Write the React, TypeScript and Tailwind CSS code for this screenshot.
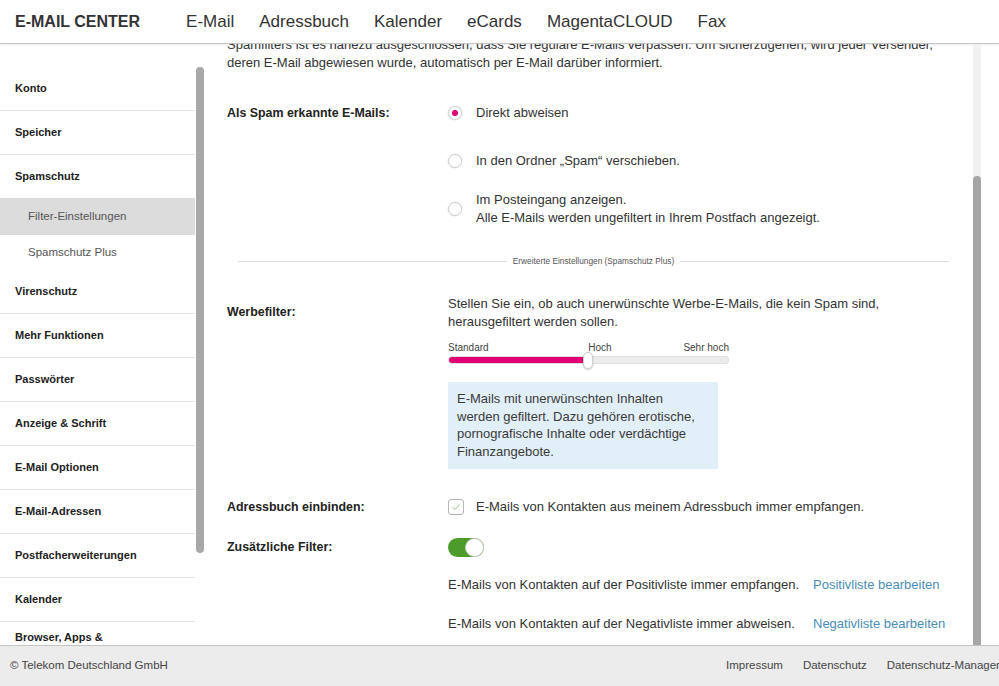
import React from "react";

const navItems = ["E-Mail", "Adressbuch", "Kalender", "eCards", "MagentaCLOUD", "Fax"];

type SideItem = { label: string; sub?: boolean; active?: boolean; h: string; border?: boolean };

const sideItems: SideItem[] = [
    { label: "Konto", h: "h-[44px] items-center", border: true },
    { label: "Speicher", h: "h-[44px] items-center", border: true },
    { label: "Spamschutz", h: "h-[43px] items-center" },
    { label: "Filter-Einstellungen", sub: true, active: true, h: "h-[37px] items-center" },
    { label: "Spamschutz Plus", sub: true, h: "h-[35px] items-center" },
    { label: "Virenschutz", h: "h-[44px] items-center", border: true },
    { label: "Mehr Funktionen", h: "h-[44px] items-center", border: true },
    { label: "Passwörter", h: "h-[44px] items-center", border: true },
    { label: "Anzeige & Schrift", h: "h-[44px] items-center", border: true },
    { label: "E-Mail Optionen", h: "h-[44px] items-center", border: true },
    { label: "E-Mail-Adressen", h: "h-[44px] items-center", border: true },
    { label: "Postfacherweiterungen", h: "h-[44px] items-center", border: true },
    { label: "Kalender", h: "h-[44px] items-center", border: true },
    { label: "Browser, Apps &", h: "h-[60px] items-start pt-[7px]", border: true },
];

const Radio = ({ checked }: { checked?: boolean }) => (
    <span className="w-[14px] h-[14px] rounded-full border border-[#d0d0d0] bg-white shadow-[0_0_2px_rgba(0,0,0,0.15)] flex items-center justify-center shrink-0">
        {checked && <span className="w-[6px] h-[6px] rounded-full bg-[#e20074]" />}
    </span>
);

const Sidebar = () => (
    <div className="flex shrink-0">
        <div className="w-[195px] pt-[23px]">
            {sideItems.map((it) => (
                <div
                    key={it.label}
                    className={`${it.h} flex ${it.border ? "border-b border-[#e3e3e3]" : ""} ${it.active ? "bg-[#dcdcdc]" : ""} ${it.sub ? "pl-[28px] text-[11.5px] text-[#555]" : "pl-[15px] text-[11px] font-bold text-[#222]"}`}
                >
                    {it.label}
                </div>
            ))}
        </div>
        <div className="w-[10px] pt-[23px] pl-[1px]">
            <div className="w-[8px] h-[486px] rounded-full bg-[#a8a8a8]" />
        </div>
    </div>
);

const Label = ({ children, className = "" }: { children: React.ReactNode; className?: string }) => (
    <div className={`w-[221px] shrink-0 text-[12.4px] font-bold text-[#222] leading-[18px] ${className}`}>{children}</div>
);

const Main = () => (
    <div className="flex-1 flex overflow-hidden">
        <div className="flex-1 pl-[22px] pr-[13px] text-[13px] text-[#333] leading-[18px] overflow-hidden">
            <div className="-mt-[8px] whitespace-nowrap">
                <div>Spamfilters ist es nahezu ausgeschlossen, dass Sie reguläre E-Mails verpassen. Um sicherzugehen, wird jeder Versender,</div>
                <div>deren E-Mail abgewiesen wurde, automatisch per E-Mail darüber informiert.</div>
            </div>

            <div className="flex mt-[17px]">
                <Label className="pt-[15px]">Als Spam erkannte E-Mails:</Label>
                <div className="flex flex-col">
                    <div className="h-[48px] flex items-center gap-[14px]">
                        <Radio checked />
                        <span>Direkt abweisen</span>
                    </div>
                    <div className="h-[48px] flex items-center gap-[14px]">
                        <Radio />
                        <span>In den Ordner „Spam“ verschieben.</span>
                    </div>
                    <div className="h-[48px] flex items-center gap-[14px]">
                        <Radio />
                        <span>
                            Im Posteingang anzeigen.
                            <br />
                            Alle E-Mails werden ungefiltert in Ihrem Postfach angezeigt.
                        </span>
                    </div>
                </div>
            </div>

            <div className="mx-[11px] mt-[20px] h-[16px] flex items-center">
                <div className="flex-1 h-px bg-[#dcdcdc]" />
                <span className="px-[6px] text-[8.3px] text-[#555] whitespace-nowrap">Erweiterte Einstellungen (Spamschutz Plus)</span>
                <div className="flex-1 h-px bg-[#dcdcdc]" />
            </div>

            <div className="flex mt-[26px]">
                <Label className="pt-[8px]">Werbefilter:</Label>
                <div className="flex flex-col">
                    <div className="whitespace-nowrap">
                        Stellen Sie ein, ob auch unerwünschte Werbe-E-Mails, die kein Spam sind,
                        <br />
                        herausgefiltert werden sollen.
                    </div>
                    <div className="w-[281px] mt-[11px]">
                        <div className="flex justify-between text-[10px] leading-[12px] text-[#444]">
                            <span>Standard</span>
                            <span className="pl-[28px]">Hoch</span>
                            <span>Sehr hoch</span>
                        </div>
                        <div className="relative mt-[2px] h-[8px] rounded-full bg-[#ececec] border border-[#dedede]">
                            <div className="h-full w-[140px] rounded-full bg-[#e20074]" />
                            <div className="absolute left-[134px] -top-[5px] w-[10px] h-[17px] rounded-[5px] bg-white border border-[#cfcfcf] shadow-[0_1px_2px_rgba(0,0,0,0.2)]" />
                        </div>
                    </div>
                    <div className="w-[270px] mt-[18px] bg-[#e1eff8] pl-[9px] pr-[6px] pt-[8px] pb-[9px] leading-[17.5px] text-[13px] text-[#3a3a3a] whitespace-nowrap">
                        E-Mails mit unerwünschten Inhalten
                        <br />
                        werden gefiltert. Dazu gehören erotische,
                        <br />
                        pornografische Inhalte oder verdächtige
                        <br />
                        Finanzangebote.
                    </div>
                </div>
            </div>

            <div className="flex mt-[29px] items-center h-[18px]">
                <Label>Adressbuch einbinden:</Label>
                <div className="flex items-center gap-[12px]">
                    <span className="w-[16px] h-[16px] rounded-[3px] border border-[#b5b5b5] bg-white flex items-center justify-center">
                        <svg width="10" height="10" viewBox="0 0 10 10">
                            <path d="M1.5 5.2 L4 7.6 L8.6 2.4" fill="none" stroke="#9bbf8a" strokeWidth="1" />
                        </svg>
                    </span>
                    <span>E-Mails von Kontakten aus meinem Adressbuch immer empfangen.</span>
                </div>
            </div>

            <div className="flex mt-[21px] items-center h-[20px]">
                <Label>Zusätzliche Filter:</Label>
                <div className="w-[36px] h-[19px] rounded-full bg-[#4d9b2b] flex items-center justify-end">
                    <span className="w-[19px] h-[19px] rounded-full bg-white border border-[#cfcfcf]" />
                </div>
            </div>

            <div className="pl-[221px] mt-[19px] grid grid-cols-[365px_auto] gap-y-[21px] whitespace-nowrap">
                <span>E-Mails von Kontakten auf der Positivliste immer empfangen.</span>
                <a className="text-[#4a8db5]">Positivliste bearbeiten</a>
                <span>E-Mails von Kontakten auf der Negativliste immer abweisen.</span>
                <a className="text-[#4a8db5]">Negativliste bearbeiten</a>
            </div>
        </div>
        <div className="w-[8px] bg-[#f1f1f1] flex flex-col shrink-0">
            <div className="h-[132px]" />
            <div className="flex-1 bg-[#a6a6a6] rounded-t-full" />
        </div>
        <div className="w-[18px] shrink-0" />
    </div>
);

export default function App() {
    return (
        <div className="w-[999px] h-[686px] flex flex-col overflow-hidden bg-white font-['Liberation_Sans',Arial,sans-serif]">
            <header className="h-[44px] shrink-0 border-b border-[#c4c4c4] flex items-center pl-[15px] shadow-[0_1px_2px_rgba(0,0,0,0.08)]">
                <span className="text-[16px] font-bold text-[#333] mr-[46px]">E-MAIL CENTER</span>
                <nav className="flex gap-[25px] text-[17px] text-[#333]">
                    {navItems.map((n) => (
                        <span key={n}>{n}</span>
                    ))}
                </nav>
            </header>
            <div className="flex-1 flex min-h-0">
                <Sidebar />
                <Main />
            </div>
            <footer className="h-[41px] shrink-0 border-t border-[#c4c4c4] bg-[#ececec] flex items-center text-[11.5px] text-[#444] whitespace-nowrap">
                <span className="w-[726px] shrink-0 pl-[10px]">© Telekom Deutschland GmbH</span>
                <span className="shrink-0">Impressum</span>
                <span className="shrink-0 ml-[20px]">Datenschutz</span>
                <span className="shrink-0 ml-[20px]">Datenschutz-Manager</span>
            </footer>
        </div>
    );
}
